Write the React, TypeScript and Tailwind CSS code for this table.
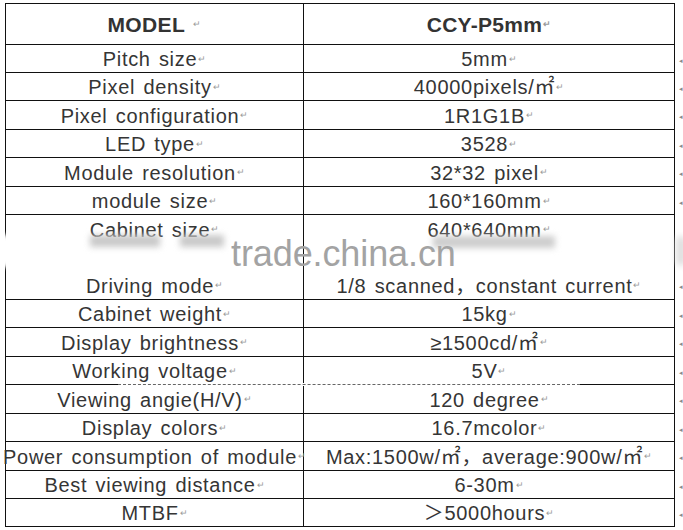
const font = { fontFamily: '"Liberation Sans", Arial, "Noto Sans CJK SC", sans-serif' };

type Row = { label: string; value: string; h: string; band?: boolean };

const rows: Row[] = [
  { label: "Pitch size", value: "5mm", h: "h-[28px]" },
  { label: "Pixel density", value: "40000pixels/㎡", h: "h-[28px]" },
  { label: "Pixel configuration", value: "1R1G1B", h: "h-[29px]" },
  { label: "LED type", value: "3528", h: "h-[28px]" },
  { label: "Module resolution", value: "32*32 pixel", h: "h-[29px]" },
  { label: "module size", value: "160*160mm", h: "h-[28px]" },
  { label: "Cabinet size", value: "640*640mm", h: "h-[28px]", band: true },
  { label: "", value: "", h: "h-[28px]", band: true },
  { label: "Driving mode", value: "1/8 scanned，constant current", h: "h-[29px]" },
  { label: "Cabinet weight", value: "15kg", h: "h-[28px]" },
  { label: "Display brightness", value: "≥1500cd/㎡", h: "h-[29px]" },
  { label: "Working voltage", value: "5V", h: "h-[28px]" },
  { label: "Viewing angie(H/V)", value: "120 degree", h: "h-[29px]" },
  { label: "Display colors", value: "16.7mcolor", h: "h-[28px]" },
  { label: "Power consumption of module", value: "Max:1500w/㎡，average:900w/㎡", h: "h-[29px]" },
  { label: "Best viewing distance", value: "6-30m", h: "h-[28px]" },
  { label: "MTBF", value: "＞5000hours", h: "h-[28px]" },
];

function Mark() {
  return <span className="ml-[1px] text-[9px] tracking-normal text-[#9a9a9a]">↵</span>;
}

function Cell({ text, left }: { text: string; left?: boolean }) {
  return (
    <div
      className={`flex items-center justify-center whitespace-nowrap pt-[1px] text-[20px] leading-none tracking-[0.7px] [word-spacing:2px] text-[#353535] ${
        left ? "w-[298px] border-r border-[#111]" : "flex-1"
      }`}
    >
      {text && (
        <>
          {text}
          <Mark />
        </>
      )}
    </div>
  );
}

export default function App() {
  return (
    <div className="relative h-[530px] w-[683px] overflow-hidden bg-white" style={font}>
      <div className="flex pl-[5px] pt-[3px]">
        <div className="w-[670px] border-x border-t border-[#111]">
          <div className="flex h-[41px] border-b border-[#111]">
            <div className="flex w-[298px] items-center justify-center border-r border-[#111] text-[21px] font-bold leading-none tracking-[0.4px] text-[#333]">
              MODEL<span className="ml-[8px] text-[9px] font-normal text-[#9a9a9a]">↵</span>
            </div>
            <div className="flex flex-1 items-center justify-center text-[21px] font-bold leading-none tracking-[0.3px] text-[#333]">
              CCY-P5mm<Mark />
            </div>
          </div>
          {rows.map((r, i) => (
            <div
              key={i}
              className={`flex ${r.h} ${r.band ? "" : "border-b border-[#111]"}`}
            >
              <Cell text={r.label} left />
              <Cell text={r.value} />
            </div>
          ))}
        </div>
        <div className="flex w-[8px] flex-col pt-[41px]">
          {rows.map((r, i) => (
            <div key={i} className={`flex ${r.h} items-center justify-end pt-[4px] text-[7px] leading-none text-[#8a8a8a]`}>
              {r.band ? "" : "◂"}
            </div>
          ))}
        </div>
      </div>

      {/* watermark band */}
      <div className="absolute left-[-6px] top-[234px] h-[34px] w-[18px] rounded-full bg-white blur-[2px]" />
      <div className="absolute left-[90px] top-[235px] h-[12px] w-[70px] bg-[#c9c9c9] blur-[3px]" />
      <div className="absolute left-[180px] top-[235px] h-[12px] w-[44px] bg-[#c9c9c9] blur-[3px]" />
      <div className="absolute left-[433px] top-[236px] h-[12px] w-[122px] bg-[#cdcdcd] blur-[3px]" />
      <div className="absolute left-[676px] top-[236px] h-[30px] w-[10px] rounded-full bg-[#dedede] blur-[3px]" />
      <div className="absolute left-[231px] top-[236px] text-[36px] leading-none tracking-[-0.1px] text-[#a3a3a3]">
        trade.china.cn
      </div>

      {/* dashed artifact */}
      <div className="absolute left-[118px] top-[383px] h-[3px] w-[462px] bg-white">
        <div className="mt-[1px] border-t-[1.5px] border-dashed border-[#666]" />
      </div>
    </div>
  );
}
